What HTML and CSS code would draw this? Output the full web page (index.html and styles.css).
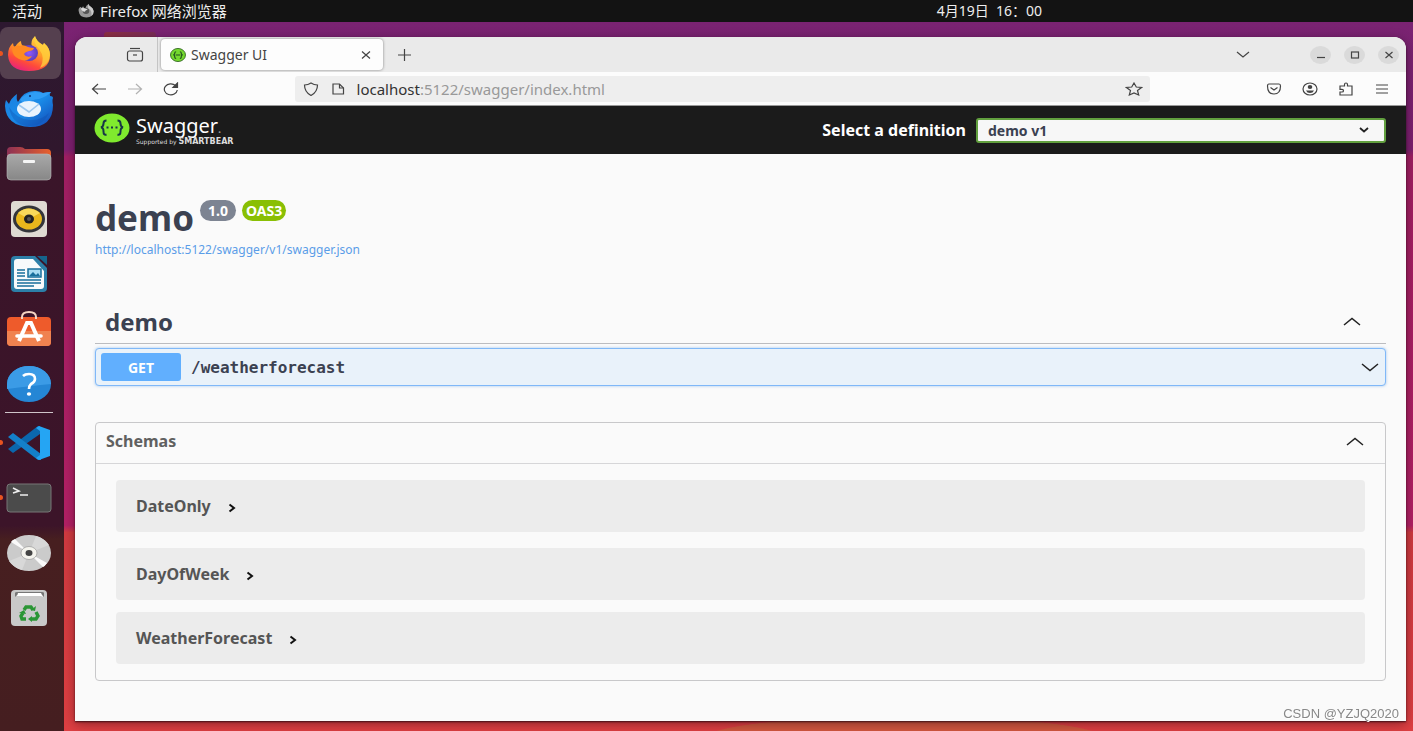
FILE: index.html
```html
<!DOCTYPE html>
<html lang="zh-CN">
<head>
<meta charset="utf-8">
<title>Swagger UI</title>
<link rel="stylesheet" href="styles.css">
</head>
<body class="desktop">
<header class="panel">
  <button class="panel-activities">活动</button>
  <button class="panel-app">
    <svg width="16" height="14" viewBox="0 0 44 38" aria-hidden="true"><path d="M2 20Q0 12 7 7l3 4 4-5q2 5 6 6Q22 4 29 0q1 5 7 8 6 3 7 12 0 16-20 17Q4 37 2 20" fill="#999"/><path d="M29 0q1 5 7 8 6 3 7 12 0 8-6 12 2-16-9-19-2-6 1-13" fill="#ccc"/><ellipse cx="22" cy="19" rx="9" ry="8" fill="#555"/><path d="M8 12q6-3 14 1l5 2q-8 2-8 6Q10 20 8 12" fill="#ddd"/></svg>
    <span>Firefox 网络浏览器</span>
  </button>
  <time class="panel-clock">4月19日&nbsp; 16：00</time>
</header>
<div class="workspace">
  <nav class="dock" aria-label="Dock">
    <button class="dock-item dock-active running" aria-label="Firefox">
      <svg width="44" height="38" viewBox="0 0 44 38"><defs><linearGradient id="ff1" x1=".8" y1="0" x2=".3" y2="1"><stop offset="0" stop-color="#ffe14a"/><stop offset=".45" stop-color="#ff9a28"/><stop offset=".75" stop-color="#ff4b3a"/><stop offset="1" stop-color="#e8227c"/></linearGradient><radialGradient id="ff2"><stop offset="0" stop-color="#9059ff"/><stop offset="1" stop-color="#5b3fbd"/></radialGradient></defs><path d="M1 20Q1 12 6 8q0 3 2 4 3-5 6-6 0 4 3 6l8-1Q23 6 28 1q1 5 8 9l1-2q6 5 6 12 0 16-21 16Q2 36 1 20" fill="url(#ff1)"/><path d="M28 1q1 5 8 9l1-2q6 5 6 12-1 10-10 13 6-10-1-19-6-5-4-13" fill="#ffd33d" opacity=".75"/><ellipse cx="22" cy="18" rx="9" ry="8" fill="url(#ff2)"/><path d="M5 13q4-3 8-2 3-2 8 1 3 1 6 1-1 3-5 3-4 1-5 3 2 4 8 2-5 7-13 3-7-3-7-11" fill="#ff8a22"/></svg>
    </button>
    <button class="dock-item" aria-label="Thunderbird">
      <svg width="50" height="40" viewBox="0 0 50 40"><defs><linearGradient id="tb" x1="0" y1="0" x2="1" y2="1"><stop offset="0" stop-color="#1c7fe0"/><stop offset=".5" stop-color="#1a8be8"/><stop offset="1" stop-color="#1247b5"/></linearGradient></defs><path d="M1 17q0-3 1-6l3 4q2-6 8-10-1 5 1 8Q20 1 32 2q4 0 7 2 5-1 8-1-2 2-1 4 3 0 3 2-1 2 0 7 0 22-23 22Q2 37 1 17" fill="url(#tb)"/><path d="M16 11Q24 0 39 4q5-1 8-1-5 5-12 7-8 0-13 6z" fill="#2f9df5"/><path d="M5 18q7 12 21 13 10 1 19-7-6 13-19 13Q8 37 5 18" fill="#0d4dab" opacity=".35"/><ellipse cx="25" cy="20" rx="12" ry="8" fill="#e9f3fd"/><path d="M15 16l10 7 10-8" fill="none" stroke="#9cc6ee" stroke-width="1.600"/><circle cx="26" cy="7" r="1" fill="#0b2f72"/></svg>
    </button>
    <button class="dock-item" aria-label="Files">
      <svg width="46" height="36" viewBox="0 0 46 36"><defs><linearGradient id="fo"><stop offset="0" stop-color="#8d3155"/><stop offset="1" stop-color="#e8612c"/></linearGradient><linearGradient id="fg" x2="0" y2="1"><stop offset="0" stop-color="#a9a9a9"/><stop offset="1" stop-color="#878787"/></linearGradient></defs><path d="M1 5q0-4 4-4h9q3 0 5 2h22q4 0 4 4v8H1z" fill="url(#fo)"/><rect x="1" y="8" width="44" height="26" rx="4" fill="url(#fg)" stroke="#bbb" stroke-width=".6"/><rect x="17" y="14" width="12" height="3" rx="1" fill="#f5f5f5"/></svg>
    </button>
    <button class="dock-item" aria-label="Rhythmbox">
      <svg width="38" height="38" viewBox="0 0 38 38"><rect x="1" y="1" width="36" height="36" rx="4" fill="#dfdad2"/><ellipse cx="19" cy="19" rx="16" ry="13.500" fill="#34353a"/><ellipse cx="19" cy="19" rx="13" ry="10.500" fill="#e9b71c"/><path d="M8 13q10-9 22 0L19 19z" fill="#f8d95b"/><ellipse cx="19" cy="19" rx="5" ry="4.500" fill="#222"/><ellipse cx="19" cy="19" rx="2" ry="2" fill="#555"/></svg>
    </button>
    <button class="dock-item" aria-label="LibreOffice Writer">
      <svg width="38" height="38" viewBox="0 0 38 38"><path d="M5 1h20l12 12v20q0 4-4 4H5q-4 0-4-4V5q0-4 4-4" fill="#2c7fa8"/><path d="M27 1h10v9z" fill="#16648c"/><path d="M7 4h16l11 12v15q0 3-3 3H7q-3 0-3-3V7q0-3 3-3" fill="#f7fafb"/><path d="M7 15h8m-8 3h8m-8 3h8m-8 4h24m-24 3h24m-24 3h17" stroke="#196f9c" stroke-width="1.6"/><rect x="18" y="14" width="13" height="8" fill="#a9dcf2" stroke="#196f9c" stroke-width="1.5"/><path d="M19 21l4-4 3 3 2-2 2 3z" fill="#196f9c"/></svg>
    </button>
    <button class="dock-item" aria-label="Ubuntu Software">
      <svg width="46" height="36" viewBox="0 0 46 36"><rect x="1" y="6" width="44" height="29" rx="4" fill="#ee5b2b"/><path d="M1 20h44v11q0 4-4 4H5q-4 0-4-4z" fill="#f08250"/><path d="M16 8V6q0-5 7-5t7 5v2" fill="none" stroke="#f5d4c2" stroke-width="2"/><path d="M13 30l8-18h4l8 18" fill="none" stroke="#fff" stroke-width="4"/><path d="M11 25h24" stroke="#fff" stroke-width="3.600" stroke-linecap="round"/></svg>
    </button>
    <button class="dock-item" aria-label="Help">
      <svg width="46" height="38" viewBox="0 0 46 38"><ellipse cx="23" cy="19" rx="22" ry="18" fill="#2586d5"/><path d="M1 19a22 18 0 0 1 44 0q-20 2-44 5z" fill="#3b9be6"/><path d="M17 11q2-2 6-2 6 0 6 5 0 3-4 5-2 2-2 5" fill="none" stroke="#fff" stroke-width="2.600"/><ellipse cx="23" cy="29" rx="2.200" ry="1.800" fill="#fff"/></svg>
    </button>
    <hr class="dock-separator">
    <button class="dock-item running" aria-label="Visual Studio Code">
      <svg width="44" height="36" viewBox="0 0 44 36"><path d="M1 24l5 4L33 9V1h-2z" fill="#0b67ad"/><path d="M1 12l5-4 28 21v6l-3 0z" fill="#1480c9"/><path d="M32 1l11 4v26l-11 4-3-2 4-3V6l-4-3z" fill="#25a5f3"/></svg>
    </button>
    <button class="dock-item running" aria-label="Terminal">
      <svg width="46" height="30" viewBox="0 0 46 30"><rect x="1" y="1" width="44" height="28" rx="3" fill="#4b4b4b" stroke="#777"/><path d="M7 5l6 3-6 2m7 2h8" fill="none" stroke="#eee" stroke-width="1.6"/></svg>
    </button>
    <button class="dock-item" aria-label="Disc">
      <svg width="46" height="38" viewBox="0 0 46 38"><ellipse cx="23" cy="19" rx="22" ry="18" fill="#cbcbcb"/><path d="M23 19L5 8q1-2 4-3zM23 19l18 10q-2 3-4 4z" fill="#f9f9f9"/><path d="M23 19L30 2q8 2 13 9zM23 19L16 36q-8-2-13-9z" fill="#d8d8d8"/><ellipse cx="23" cy="19" rx="8" ry="6.500" fill="#f5f4ee" stroke="#999" stroke-width=".7"/><ellipse cx="23" cy="19" rx="3.500" ry="3" fill="#444"/></svg>
    </button>
    <button class="dock-item" aria-label="Trash">
      <svg width="38" height="38" viewBox="0 0 38 38"><rect x="1" y="1" width="36" height="36" rx="4" fill="#c9c9c9"/><path d="M5 8V4q0-1 2-1h25q2 0 2 1v4l-2-2H7z" fill="#777"/><path d="M7 7l1-3h23l2 4-2-1z" fill="#fff"/><g transform="translate(19 24)" fill="none" stroke="#2b9635" stroke-width="3.400"><path d="M-5-3l2-3h5l2 3M7-1l2 4-2 3H2M-3 6h-4l-1-3 2-3"/></g><path d="M21 21l4 1 1-5zM22 27v6l-4-3zM9 24l5-3 2 4z" fill="#2b9635"/></svg>
    </button>
  </nav>
  <div class="folder-peek"></div>
  <section class="window">
    <div class="tabbar">
      <button class="icon-button recent" aria-label="Recent tabs"><svg width="18" height="16" viewBox="0 0 18 16"><path d="M4 1.500h10"/><rect x="1.500" y="4" width="15" height="10" rx="2"/><path d="M7 8h4"/></svg></button>
      <div class="tab">
        <svg class="tab-favicon" width="16" height="14" viewBox="0 0 34 30" aria-hidden="true"><ellipse cx="17" cy="15" rx="16" ry="14" fill="#75d92f" stroke="#356c22" stroke-width="2"/><path d="M13 8q-3 0-3 3t-3 4q3 0 3 4t3 3M21 8q3 0 3 3t3 4q-3 0-3 4t-3 3M12 15h10" fill="none" stroke="#23521f" stroke-width="2.500"/></svg>
        <span class="tab-title">Swagger UI</span>
        <button class="tab-close" aria-label="Close tab"><svg width="10" height="10" viewBox="0 0 10 10"><path d="M1 1.500l8 7M9 1.500l-8 7"/></svg></button>
      </div>
      <button class="icon-button new-tab" aria-label="New tab"><svg width="13" height="12" viewBox="0 0 13 12"><path d="M6.500 0v12M0 6h13"/></svg></button>
      <button class="icon-button tab-list" aria-label="List all tabs"><svg width="14" height="8" viewBox="0 0 14 8"><path d="M1 1l6 5 6-5"/></svg></button>
      <div class="window-controls">
        <button aria-label="Minimize"><svg width="10" height="10" viewBox="0 0 10 10"><path d="M1 7.500h8"/></svg></button>
        <button aria-label="Maximize"><svg width="10" height="10" viewBox="0 0 10 10"><rect x="1.500" y="2" width="7" height="6"/></svg></button>
        <button aria-label="Close"><svg width="10" height="10" viewBox="0 0 10 10"><path d="M1.500 2l7 6M8.500 2l-7 6"/></svg></button>
      </div>
    </div>
    <div class="toolbar">
      <button class="icon-button" aria-label="Back"><svg width="16" height="12" viewBox="0 0 16 12"><path d="M15 6H2M7 1L1.500 6 7 11"/></svg></button>
      <button class="icon-button faded" aria-label="Forward"><svg width="16" height="12" viewBox="0 0 16 12"><path d="M1 6h13M9 1l5.500 5L9 11"/></svg></button>
      <button class="icon-button" aria-label="Reload"><svg width="16" height="14" viewBox="0 0 16 14"><path d="M12.500 3.500A6.500 5.500 0 1 0 14.300 8"/><path d="M14.500 1v4.500H10z" fill="#444"/></svg></button>
      <div class="urlbar">
        <svg width="16" height="14" viewBox="0 0 16 14" aria-hidden="true"><path d="M8 1q3 2 6.500 2 0 7-6.500 10.500Q1.500 10 1.500 3 5 3 8 1z"/></svg>
        <svg width="14" height="12" viewBox="0 0 14 12" aria-hidden="true"><path d="M2 1h6.500L12.500 5v6H2z"/><path d="M8.500 1v4h4" /></svg>
        <a class="url" href="#"><span class="url-host">localhost</span>:5122/swagger/index.html</a>
        <svg width="18" height="14" viewBox="0 0 18 14" aria-hidden="true"><path d="M9 1l2.300 4 5.200.5-4 3 1.200 4.500L9 11l-4.700 2 1.200-4.500-4-3L6.700 5z"/></svg>
      </div>
      <button class="icon-button" aria-label="Pocket"><svg width="16" height="12" viewBox="0 0 16 12"><path d="M3 1h10q1.500 0 1.500 2 0 8-6.500 8T1.500 3Q1.500 1 3 1zM4.500 4.500L8 7l3.500-2.500"/></svg></button>
      <button class="icon-button" aria-label="Account"><svg width="16" height="14" viewBox="0 0 16 14"><ellipse cx="8" cy="7" rx="7" ry="6"/><ellipse cx="8" cy="5" rx="2.300" ry="2" fill="#444" stroke="none"/><path d="M4 8.500h8q-1 2.500-4 2.500t-4-2.500" fill="#444" stroke="none"/></svg></button>
      <button class="icon-button" aria-label="Extensions"><svg width="16" height="14" viewBox="0 0 16 14"><path d="M2 4h4.500V2.500q0-1.500 1.500-1.500t1.500 1.500V4H14v9H2v-3h2q1.500 0 1.500-1.300T4 7.300H2z"/></svg></button>
      <button class="icon-button" aria-label="Menu"><svg width="14" height="10" viewBox="0 0 14 10"><path d="M1 1h12M1 5h12M1 9h12"/></svg></button>
    </div>
    <div class="topbar">
      <a class="logo" href="#">
        <svg width="36" height="30" viewBox="0 0 36 30" aria-hidden="true"><ellipse cx="18" cy="15" rx="17.500" ry="14.500" fill="#80ea2e"/><path d="M12.500 7.500q-3 0-3 3t-2.500 4q2.500 0 2.500 4t3 3M23.500 7.500q3 0 3 3t2.500 4q-2.500 0-2.500 4t-3 3" fill="none" stroke="#173647" stroke-width="2"/><path d="M12.500 14.500h2m2.500 0h2m2.500 0h2" stroke="#173647" stroke-width="2"/></svg>
        <span class="logo-text">
          <span class="logo-name">Swagger<small>.</small></span>
          <span class="logo-support">Supported by <b>SMARTBEAR</b></span>
        </span>
      </a>
      <label class="definition-label" for="definition">Select a definition</label>
      <div class="select-wrap">
        <select id="definition" class="definition"><option>demo v1</option></select>
        <svg class="select-arrow" width="10" height="6" viewBox="0 0 10 6" aria-hidden="true"><path d="M1 1l4 3.500L9 1"/></svg>
      </div>
    </div>
    <main class="content">
      <div class="info">
        <h1 class="title">demo</h1>
        <span class="badge">1.0</span>
        <span class="badge badge-oas">OAS3</span>
      </div>
      <a class="spec-link" href="#">http://localhost:5122/swagger/v1/swagger.json</a>
      <div class="tag">
        <h2 class="tag-name">demo</h2>
        <button class="toggle" aria-label="Collapse demo"><svg width="18" height="9" viewBox="0 0 18 9"><path d="M1 8l8-6.500L17 8"/></svg></button>
      </div>
      <div class="operation">
        <button class="method">GET</button>
        <span class="path">/weatherforecast</span>
        <button class="toggle" aria-label="Expand operation"><svg width="18" height="9" viewBox="0 0 18 9"><path d="M1 1l8 6.500L17 1"/></svg></button>
      </div>
      <section class="schemas">
        <div class="schemas-head">
          <h3 class="schemas-title">Schemas</h3>
          <button class="toggle" aria-label="Collapse schemas"><svg width="18" height="9" viewBox="0 0 18 9"><path d="M1 8l8-6.500L17 8"/></svg></button>
        </div>
        <div class="schema-list">
          <button class="schema schema-first">DateOnly<svg width="8" height="10" viewBox="0 0 8 10"><path d="M1.500 1.500L6 5 1.500 8.500"/></svg></button>
          <button class="schema">DayOfWeek<svg width="8" height="10" viewBox="0 0 8 10"><path d="M1.500 1.500L6 5 1.500 8.500"/></svg></button>
          <button class="schema">WeatherForecast<svg width="8" height="10" viewBox="0 0 8 10"><path d="M1.500 1.500L6 5 1.500 8.500"/></svg></button>
        </div>
      </section>
    </main>
  </section>
</div>
<div class="watermark">CSDN @YZJQ2020</div>
</body>
</html>
```
FILE: styles.css
```css
* { box-sizing: border-box; }

button, select {
  margin: 0;
  padding: 0;
  border: 0;
  background: none;
  color: inherit;
  font: inherit;
}

h1, h2, h3 { margin: 0; }

svg { display: block; flex: none; }

.desktop {
  display: flex;
  flex-direction: column;
  min-height: 100vh;
  margin: 0;
  font-family: "Noto Sans", "Noto Sans CJK SC", sans-serif;
  font-size: 14px;
}

/* Top panel */
.panel {
  display: flex;
  align-items: center;
  height: 22px;
  padding-left: 12px;
  background: #131313;
  color: #eee;
  line-height: 22px;
}

.panel-activities { font-size: 15px; }

.panel-app {
  display: flex;
  align-items: center;
  gap: 6px;
  margin-left: 36px;
  font-size: 15px;
}

.panel-clock {
  margin-left: auto;
  margin-right: 371px;
}

/* Wallpaper */
.workspace {
  position: relative;
  display: flex;
  flex: 1;
  background:
    radial-gradient(ellipse 200px 22px at 64% 101%, #d2573f 98%, transparent),
    linear-gradient(to bottom, #7a2372 0, #7d2070 18%, #a01f63 19%, #b32065 71%, #d03a40 72%, #de3f42 100%);
}

/* Dock */
.dock {
  display: flex;
  flex: none;
  flex-direction: column;
  gap: 3px;
  width: 64px;
  padding-top: 5px;
  background: linear-gradient(to bottom, #2d1830 0, #30172d 18%, #3a1529 19%, #3c1429 71%, #471f20 73%, #451e20 100%);
}

.dock-item {
  position: relative;
  display: flex;
  align-items: center;
  justify-content: center;
  width: 61px;
  height: 52px;
  padding: 1px 4px 0 0;
  border-radius: 8px;
}

.dock-active { background: #55404f; }

.running::before {
  content: "";
  position: absolute;
  left: -2px;
  top: 24px;
  width: 5px;
  height: 5px;
  border-radius: 50%;
  background: #e95420;
}

.dock-separator {
  width: 48px;
  height: 1px;
  margin: 0 5px;
  border: 0;
  background: #cfc5ca;
}

.folder-peek {
  position: absolute;
  left: 104px;
  top: 10px;
  width: 52px;
  height: 6px;
  background: linear-gradient(to right, #8d3044, #7a2c58);
  border-radius: 3px 3px 0 0;
}

/* Browser window */
.window {
  position: relative;
  display: flex;
  flex: 1;
  flex-direction: column;
  margin: 15px 7px 10px 11px;
  border-radius: 12px 12px 0 0;
  background: #fafafa;
  box-shadow: 0 1px 2px rgba(20, 0, 10, .7), 0 3px 12px rgba(20, 0, 10, .4);
}

.tabbar {
  display: flex;
  align-items: center;
  height: 35px;
  padding-right: 7px;
  border-radius: 12px 12px 0 0;
  background: #eaeaea;
}

.icon-button {
  display: flex;
  flex: none;
  align-items: center;
  justify-content: center;
  width: 36px;
  height: 28px;
}

.icon-button svg, .tab-close svg, .window-controls svg, .urlbar svg {
  fill: none;
  stroke: #444;
  stroke-width: 1.2;
}

.faded { opacity: .4; }

.recent {
  width: 83px;
  height: 35px;
  padding-left: 37px;
  border-right: 1px solid #c4c4c4;
}

.tab {
  display: flex;
  align-items: center;
  width: 222px;
  height: 31px;
  margin-left: 3px;
  padding: 0 8px 0 9px;
  border-radius: 4px;
  background: #fdfdfd;
  box-shadow: 0 0 3px rgba(0, 0, 0, .45);
}

.tab-title {
  flex: 1;
  margin-left: 5px;
  color: #444;
}

.tab-close {
  display: flex;
  align-items: center;
  justify-content: center;
  width: 18px;
  height: 20px;
}

.new-tab { margin-left: 3px; }

.tab-list { margin-left: auto; }

.window-controls {
  display: flex;
  gap: 13px;
  margin-left: 49px;
}

.window-controls button {
  display: flex;
  align-items: center;
  justify-content: center;
  width: 21px;
  height: 18px;
  border-radius: 50%;
  background: #dadada;
}

.toolbar {
  display: flex;
  align-items: center;
  height: 34px;
  padding: 0 6px;
  border-bottom: 1px solid #999;
  background: #fcfcfc;
}

.urlbar {
  display: flex;
  flex: 1;
  align-items: center;
  height: 26px;
  margin: 0 8%;
  padding: 0 7px 0 8px;
  border-radius: 3px;
  background: #eee;
}

.urlbar svg + svg { margin-left: 12px; }

.url {
  flex: 1;
  margin-left: 12px;
  color: #999;
  font-size: 15px;
  text-decoration: none;
}

.url-host { color: #333; }

/* Swagger top bar */
.topbar {
  display: flex;
  align-items: center;
  height: 48px;
  padding: 0 20px 0 19px;
  background: #1b1b1b;
  color: #fff;
}

.logo {
  display: flex;
  align-items: flex-start;
  gap: 6px;
  padding-bottom: 2px;
  color: #fff;
  text-decoration: none;
}

.logo-text {
  display: flex;
  flex-direction: column;
}

.logo-name {
  font-size: 20px;
  line-height: 26px;
}

.logo-name small {
  font-size: 12px;
  line-height: 1;
  opacity: .6;
}

.logo-support {
  font-family: "DejaVu Sans", sans-serif;
  font-size: 6px;
  line-height: 6px;
  color: #ddd;
}

.logo-support b { font-size: 8px; }

.definition-label {
  margin-left: auto;
  font-size: 16px;
  font-weight: 700;
}

.select-wrap {
  display: grid;
  align-items: center;
  width: 410px;
  margin-left: 10px;
}

.definition {
  grid-area: 1 / 1;
  width: 100%;
  height: 25px;
  padding: 0 10px;
  border: 2px solid #62a03f;
  border-radius: 3px;
  appearance: none;
  background: #f7f7f7;
  color: #3b4151;
  font-weight: 700;
}

.select-arrow {
  grid-area: 1 / 1;
  justify-self: end;
  margin-right: 17px;
  fill: none;
  stroke: #222;
  stroke-width: 1.8;
  pointer-events: none;
}

/* Swagger page */
.content {
  display: flex;
  flex: 1;
  flex-direction: column;
  padding: 40px 20px;
  color: #3b4151;
}

.info {
  display: flex;
  align-items: flex-start;
  gap: 6px;
}

.title {
  font-size: 35px;
  line-height: 48px;
}

.badge {
  height: 21px;
  margin-top: 6px;
  padding: 0 8px;
  border-radius: 11px;
  background: #7d8492;
  color: #fff;
  font-size: 14px;
  font-weight: 700;
  line-height: 21px;
}

.badge-oas {
  padding: 0 4px;
  background: #89bf04;
}

.spec-link {
  align-self: flex-start;
  color: #5a9de8;
  font-size: 12px;
  line-height: 16px;
  text-decoration: none;
}

.tag {
  display: flex;
  align-items: center;
  justify-content: space-between;
  height: 44px;
  margin-top: 42px;
  padding: 0 25px 0 10px;
  border-bottom: 1px solid #bbbcc0;
}

.tag-name {
  font-size: 24px;
  line-height: 32px;
}

.toggle svg {
  fill: none;
  stroke: #222;
  stroke-width: 1.5;
}

.operation {
  display: flex;
  align-items: center;
  height: 38px;
  margin-top: 4px;
  padding: 0 6px 0 5px;
  border: 1px solid #80b8f8;
  border-radius: 4px;
  background: #e9f2fa;
  box-shadow: 0 0 3px rgba(97, 160, 230, .6);
}

.method {
  width: 80px;
  height: 28px;
  border-radius: 3px;
  background: #61affe;
  color: #fff;
  font-weight: 700;
}

.path {
  flex: 1;
  margin-left: 10px;
  font-family: "DejaVu Sans Mono", monospace;
  font-size: 16px;
  font-weight: 700;
}

.schemas {
  margin-top: 36px;
  border: 1px solid #c8c8ca;
  border-radius: 4px;
  color: #555;
}

.schemas-head {
  display: flex;
  align-items: center;
  justify-content: space-between;
  height: 41px;
  padding: 0 21px 4px 10px;
  border-bottom: 1px solid #d6d6d8;
}

.schemas-title {
  color: #606060;
  font-size: 16px;
  line-height: 24px;
}

.schema-list {
  display: flex;
  flex-direction: column;
  gap: 12px;
  padding: 16px 20px;
}

.schema {
  display: flex;
  align-items: center;
  gap: 17px;
  height: 52px;
  padding: 0 20px;
  border-radius: 4px;
  background: #ececec;
  font-size: 16px;
  font-weight: 700;
}

.schema-first { margin-bottom: 4px; }

.schema svg {
  margin-top: 3px;
  fill: none;
  stroke: #111;
  stroke-width: 2;
}

.watermark {
  position: fixed;
  right: 14px;
  bottom: 8px;
  color: #888;
  font-family: "Liberation Sans", Arial, sans-serif;
  font-size: 13px;
  line-height: 18px;
  text-shadow: 1px 1px 0 #fff;
}
```
